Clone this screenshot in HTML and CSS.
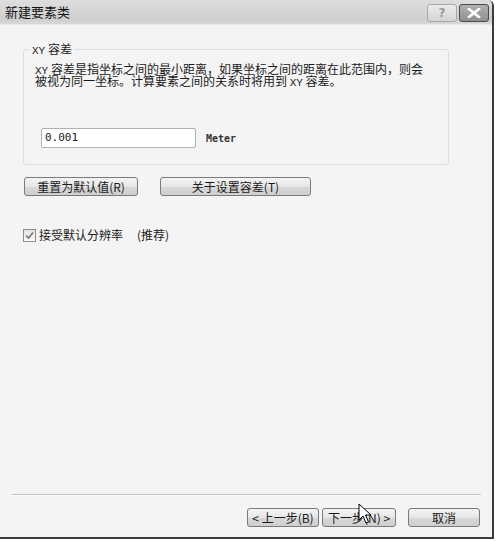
FILE: index.html
```html
<!DOCTYPE html>
<html>
<head>
<meta charset="utf-8">
<link rel="stylesheet" href="styles.css">
</head>
<body>
<div class="window">
  <div class="titlebar">
    <span class="title">新建要素类</span>
    <div class="caption-btns">
      <span class="cap-btn help">?</span>
      <span class="cap-btn close"><svg width="14" height="10" viewBox="0 0 14 10"><path d="M2 1 L12 9 M12 1 L2 9" stroke="#fff" stroke-width="2.6" stroke-linecap="square"/></svg></span>
    </div>
  </div>
  <div class="body">
    <fieldset class="group">
      <legend class="legend"><span class="mono">XY</span> 容差</legend>
      <div class="group-inner">
        <p class="desc"><span class="mono">XY</span> 容差是指坐标之间的最小距离，如果坐标之间的距离在此范围内，则会<br>被视为同一坐标。计算要素之间的关系时将用到 <span class="mono">XY</span> 容差。</p>
        <div class="value-row">
          <div class="input">0.001</div>
          <span class="unit">Meter</span>
        </div>
      </div>
    </fieldset>
    <div class="btn-row">
      <span class="btn w114">重置为默认值(R)</span>
      <span class="btn w151">关于设置容差(T)</span>
    </div>
    <label class="check-row">
      <span class="checkbox"><svg width="9" height="9" viewBox="0 0 9 9"><path d="M1 4.5 L3.5 7 L8 1.5" fill="none" stroke="#777" stroke-width="1.6"/></svg></span>
      <span>接受默认分辨率</span>
      <span class="hint">(推荐)</span>
    </label>
    <div class="spacer"></div>
    <div class="separator"></div>
    <div class="footer">
      <span class="btn back">&lt; 上一步(B)</span>
      <span class="btn next">下一步(N) &gt;</span>
      <span class="btn cancel">取消</span>
    </div>
  </div>
  <svg class="cursor" width="14" height="22" viewBox="0 0 14 22"><path d="M1 1 L1 17 L5 13 L8 20 L10.5 19 L7.5 12 L13 12 Z" fill="#fff" stroke="#000" stroke-width="1"/></svg>
</div>
</body>
</html>
```
FILE: styles.css
```css
html, body {
  margin: 0;
  padding: 0;
  background: #ffffff;
}
body {
  font-family: "Noto Sans CJK SC", "DejaVu Sans", sans-serif;
  font-size: 12px;
  color: #1a1a1a;
}
.window {
  position: relative;
  width: 494px;
  height: 539px;
  box-sizing: border-box;
  border-right: 2px solid #3c3c3c;
  border-bottom: 2px solid #3c3c3c;
  border-top-right-radius: 6px;
  background: #f4f4f4;
  display: flex;
  flex-direction: column;
  overflow: hidden;
}
.titlebar {
  height: 25px;
  flex: none;
  display: flex;
  align-items: center;
  justify-content: space-between;
  padding: 0 3px 0 5px;
  background: linear-gradient(#dedede, #cfcfcf 80%, #d8d8d8);
  border-bottom: 1px solid #e8e8e8;
  box-sizing: border-box;
}
.title {
  font-size: 13px;
  color: #111;
  line-height: 16px;
}
.caption-btns {
  display: flex;
  gap: 2px;
  align-self: flex-start;
  margin-top: 4px;
}
.cap-btn {
  width: 30px;
  height: 18px;
  box-sizing: border-box;
  border-radius: 3px;
  display: flex;
  align-items: center;
  justify-content: center;
}
.help {
  border: 1px solid #a8a8a8;
  background: linear-gradient(#ececec, #d4d4d4);
  color: #9a9a9a;
  font-family: "DejaVu Sans", sans-serif;
  font-weight: bold;
  font-size: 12px;
}
.close {
  border: 1px solid #4a4a4a;
  background: linear-gradient(#b0b0b0, #909090);
}
.body {
  flex: 1;
  display: flex;
  flex-direction: column;
}
.mono {
  font-family: "Liberation Mono", "DejaVu Sans Mono", monospace;
  font-size: 11px;
  line-height: 0;
}
.group {
  margin: 17px 0 0 23px;
  width: 426px;
  box-sizing: border-box;
  border: 1px solid #dcdcdc;
  border-radius: 3px;
  padding: 0 0 16px 6px;
  min-width: 0;
}
.legend {
  padding: 0 2px;
  height: 14px;
  line-height: 14px;
  font-size: 12px;
}
.group-inner {
  padding-left: 5px;
}
.desc {
  margin: 7px 0 0 0;
  height: 24px;
  line-height: 12px;
  font-size: 12px;
  white-space: nowrap;
}
.value-row {
  margin-top: 41px;
  margin-left: 6px;
  display: flex;
  align-items: center;
}
.input {
  width: 155px;
  height: 20px;
  box-sizing: border-box;
  border: 1px solid #b0b0b0;
  border-radius: 2px;
  background: #fff;
  font-family: "DejaVu Sans Mono", monospace;
  font-size: 11px;
  line-height: 18px;
  padding-left: 3px;
}
.unit {
  margin-left: 10px;
  font-family: "DejaVu Sans Mono", monospace;
  font-weight: bold;
  font-size: 10px;
  color: #333;
}
.btn-row {
  margin: 12px 0 0 24px;
  display: flex;
  gap: 22px;
}
.btn {
  height: 19px;
  box-sizing: border-box;
  border: 1px solid #7a7a7a;
  border-radius: 3px;
  background: linear-gradient(#f4f4f4, #e6e6e6 50%, #d8d8d8 51%, #cfcfcf);
  display: flex;
  align-items: center;
  justify-content: center;
  font-size: 12px;
  line-height: 17px;
  white-space: nowrap;
}
.w114 { width: 114px; }
.w151 { width: 151px; }
.check-row {
  margin: 32px 0 0 23px;
  display: flex;
  align-items: center;
  gap: 3px;
  line-height: 14px;
}
.hint {
  margin-left: 11px;
}
.checkbox {
  width: 13px;
  height: 13px;
  box-sizing: border-box;
  border: 1px solid #8e8e8e;
  background: linear-gradient(#e4e4e4, #fafafa);
  display: flex;
  align-items: center;
  justify-content: center;
}
.spacer {
  flex: 1;
}
.separator {
  height: 1px;
  background: #c4c4c4;
  border-bottom: 1px solid #fbfbfb;
  margin: 0 11px 0 12px;
}
.footer {
  display: flex;
  justify-content: flex-end;
  padding: 12px 12px 10px 0;
}
.back { width: 72px; }
.next { width: 74px; margin-left: 3px; }
.cancel { width: 72px; margin-left: 12px; }
.cursor {
  position: absolute;
  left: 358px;
  top: 503px;
}
```
